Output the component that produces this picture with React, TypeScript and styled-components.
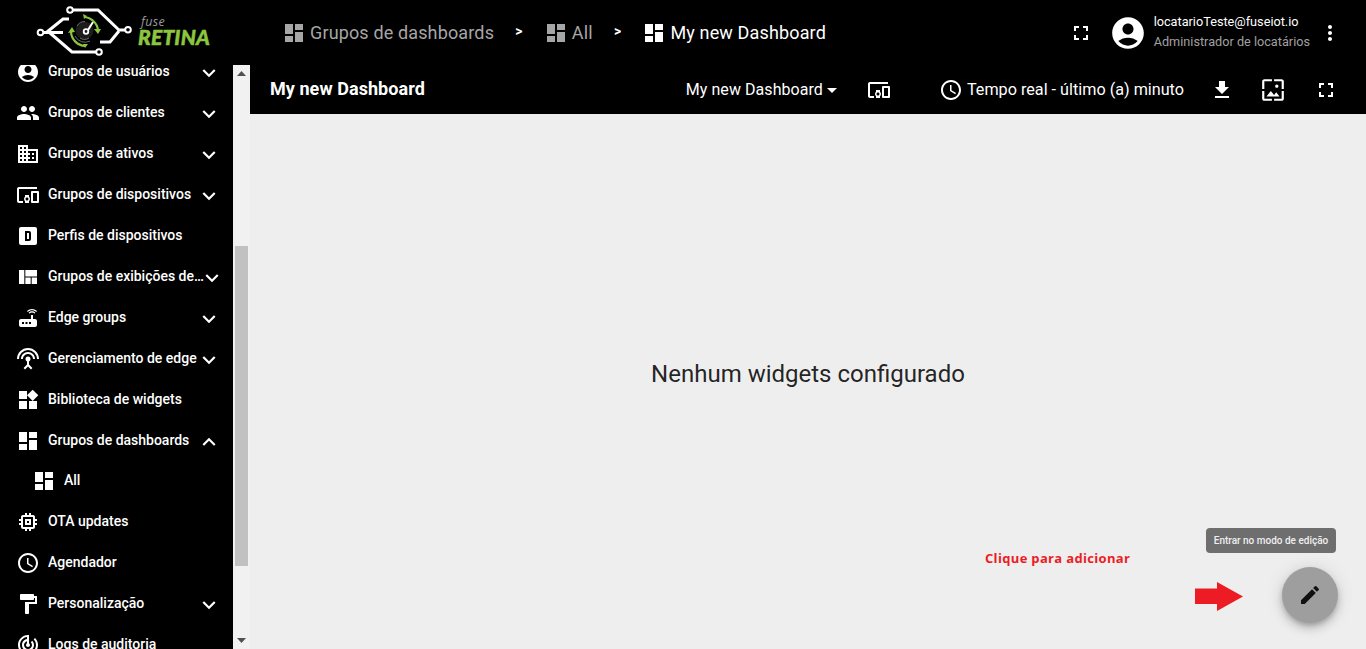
import React from "react";
import styled, { createGlobalStyle } from "styled-components";
import {
  MdAccountCircle, MdPeople, MdDomain, MdDevicesOther, MdViewQuilt, MdRouter,
  MdSettingsInputAntenna, MdWidgets, MdDashboard, MdMemory, MdSchedule, MdFormatPaint,
  MdTrackChanges, MdKeyboardArrowDown, MdKeyboardArrowUp, MdFullscreen, MdMoreVert,
  MdFileDownload, MdWallpaper, MdEdit, MdArrowDropDown,
} from "react-icons/md";

const Global = createGlobalStyle`
  html, body { margin: 0; padding: 0; height: 100%; overflow: hidden; }
  body { font-family: Roboto, "Liberation Sans", sans-serif; background: #eee; }
  #root { height: 100%; }
`;

const Page = styled.div`
  width: 1366px; height: 649px; display: flex; flex-direction: column; overflow: hidden; position: relative;
`;
const Header = styled.header`
  height: 65px; flex: none; background: #000; color: #fff; display: flex; align-items: center;
`;
const LogoBox = styled.div`
  width: 282px; flex: none; display: flex; padding-left: 36px; box-sizing: border-box; align-items: center;
`;
const LogoWords = styled.div`
  display: flex; flex-direction: column; margin-left: 2px; line-height: 1;
`;
const Fuse = styled.span`
  font: italic 400 12.5px "Open Sans", sans-serif; color: #999; line-height: 8px; letter-spacing: .3px; padding-left: 3px;
`;
const Retina = styled.span`
  font: italic 900 21px Lato, sans-serif; color: #8cc63f; line-height: 21px; letter-spacing: .2px;
  -webkit-text-stroke: .5px #8cc63f;
`;
const Crumbs = styled.nav`
  display: flex; align-items: center; flex: 1;
`;
const Crumb = styled.span<{ $active?: boolean }>`
  display: flex; align-items: center; gap: 4px; font-size: 18px; letter-spacing: .14px;
  color: ${p => (p.$active ? "#fff" : "#a6a6a6")};
`;
const Sep = styled.span`
  font-size: 14px; font-weight: 700; color: #fff; margin: 0 21.25px; position: relative; top: -2px;
`;
const UserArea = styled.div`
  display: flex; align-items: center; padding-right: 24px;
`;
const UserText = styled.div`
  display: flex; flex-direction: column; gap: 5px; margin: 0 8px 0 7px; font-size: 12.7px; line-height: 14px;
`;
const Email = styled.span`color: #fff; position: relative; top: -1px;`;
const Role = styled.span`color: #a0a0a0;`;
const Body = styled.div`flex: 1; display: flex; min-height: 0;`;
const Sidebar = styled.aside`
  width: 233px; flex: none; background: #000; overflow: hidden;
`;
const NavList = styled.ul`
  list-style: none; margin: -13.5px 0 0; padding: 0;
`;
const Row = styled.li<{ $sub?: boolean }>`
  height: ${p => (p.$sub ? "40px" : "41px")}; display: flex; align-items: center; color: #fff; font-size: 14px; font-weight: 500;
  padding: 0 11px ${p => (p.$sub ? "1px" : "0")} ${p => (p.$sub ? "32px" : "16px")}; gap: 8px; box-sizing: border-box;
  & > svg { flex: none; }
`;
const LabelSlot = styled.span`flex: 1; min-width: 0;`;
const Label = styled.span`
  display: block; max-width: 156px; white-space: nowrap; overflow: hidden; text-overflow: ellipsis; position: relative; top: -1px;
`;
const Chevron = styled.span<{ $nudge?: boolean }>`
  flex: none; display: flex; margin: 2px ${p => (p.$nudge ? "-2.5px" : "0")} 0 -26px;
`;
const Scroll = styled.div`
  width: 17px; flex: none; background: #f1f1f1; display: flex; flex-direction: column;
`;
const ScrollBtn = styled.div`
  height: 17px; flex: none; display: flex; align-items: center; justify-content: center;
`;
const ScrollTrack = styled.div`flex: 1; padding: 164px 2px 0;`;
const ScrollThumb = styled.div`height: 320px; background: #c1c1c1;`;
const Main = styled.main`flex: 1; display: flex; flex-direction: column; min-width: 0; position: relative;`;
const Toolbar = styled.div`
  height: 49px; flex: none; background: #000; color: #fff; display: flex; align-items: center; padding: 0 28px 0 20px;
`;
const Title = styled.h1`
  font-size: 18px; font-weight: 700; margin: -2px 0 0; flex: 1; letter-spacing: .06px;
`;
const Select = styled.span`
  display: flex; align-items: center; font-size: 16px; letter-spacing: .06px; margin-right: 23px;
`;
const Caret = styled(MdArrowDropDown)`
  margin-left: -3px;
`;
const ToolBtn = styled.span<{ $mr?: number }>`
  display: flex; margin-right: ${p => p.$mr ?? 0}px;
`;
const Time = styled.span`
  display: flex; align-items: center; gap: 4px; font-size: 16.2px; margin-right: 26px;
`;
const Content = styled.div`
  flex: 1; background: #eee; display: flex; align-items: center; justify-content: center; padding-bottom: 16px;
`;
const Empty = styled.div`font-size: 24px; color: rgba(0,0,0,.87);`;
const Hint = styled.div`
  position: absolute; left: 735px; top: 484px; color: #ed1c24; font: 700 13px "Open Sans", sans-serif; letter-spacing: .33px; white-space: nowrap;
`;
const ArrowMark = styled.svg`position: absolute; left: 945px; top: 517px;`;
const Fab = styled.button`
  position: absolute; left: 1032px; top: 502px; width: 56px; height: 56px; border-radius: 50%; border: 0; padding: 0;
  background: #9e9e9e; color: #111; display: flex; align-items: center; justify-content: center;
  box-shadow: 0 3px 5px -1px rgba(0,0,0,.2), 0 6px 10px 0 rgba(0,0,0,.14), 0 1px 18px 0 rgba(0,0,0,.12);
`;
const Tip = styled.div`
  position: absolute; left: 956px; top: 463px; width: 130px; height: 25px; border-radius: 4px; background: #6e6e6e;
  color: #eee; font-size: 10px; font-weight: 500; display: flex; align-items: center; justify-content: center;
`;

const DBox = () => (
  <svg width="24" height="24" viewBox="0 0 24 24" fill="#fff" fillRule="evenodd">
    <path d="M9 7v10h4a2 2 0 0 0 2-2V9a2 2 0 0 0-2-2H9m2 2h2v6h-2V9M5 3h14a2 2 0 0 1 2 2v14a2 2 0 0 1-2 2H5a2 2 0 0 1-2-2V5a2 2 0 0 1 2-2z" />
  </svg>
);

const Logo = () => (
  <svg width="100" height="57" viewBox="36 4 100 57" fill="none">
    <g stroke="#fff" strokeWidth="3" strokeLinejoin="miter" strokeLinecap="butt">
      <path d="M72 10h26l21 20h7" />
      <path d="M100 42h10l9-11" />
      <path d="M43 32.500h20" />
      <path d="M47 32L63 19h6" />
      <path d="M50 33l22 19h25" />
    </g>
    <g stroke="#fff" strokeWidth="2" fill="#000">
      <circle cx="70" cy="10" r="2.800" />
      <circle cx="40.500" cy="32.500" r="2.800" />
      <circle cx="128" cy="29.800" r="2.800" />
      <circle cx="99" cy="52" r="2.800" />
    </g>
    <g stroke="#8cc63f" strokeWidth="2.200">
      <path d="M84 17a15 15 0 0 1 14 13" />
      <path d="M85 46a15 15 0 0 1-14-14" />
    </g>
    <g fill="#8cc63f">
      <path d="M83 14l4 2-3 3zM94 29l7 0-3 5zM88 44l-3 4-2-4zM68 33l7-1-3-5z" />
    </g>
    <circle cx="84.500" cy="30.500" r="9" fill="#1c1c1c" />
    <g stroke="#6a6a6a" strokeWidth="1">
      <path d="M77 26a9 9 0 0 1 8-4.500" />
      <path d="M75 36a11 11 0 0 0 15 5" />
      <path d="M80 38a8 8 0 0 0 9 0" />
    </g>
    <path d="M88 30l5-8" stroke="#fff" strokeWidth="2" />
    <circle cx="86" cy="31.500" r="2.300" stroke="#fff" strokeWidth="1.800" />
  </svg>
);

const items: { icon: React.ReactNode; label: string; chevron?: "down" | "up"; nudge?: boolean; sub?: boolean }[] = [
  { icon: <MdAccountCircle size={24} />, label: "Grupos de usuários", chevron: "down" },
  { icon: <MdPeople size={24} />, label: "Grupos de clientes", chevron: "down" },
  { icon: <MdDomain size={24} />, label: "Grupos de ativos", chevron: "down" },
  { icon: <MdDevicesOther size={24} />, label: "Grupos de dispositivos", chevron: "down" },
  { icon: <DBox />, label: "Perfis de dispositivos" },
  { icon: <MdViewQuilt size={24} />, label: "Grupos de exibições de entidades", chevron: "down", nudge: true },
  { icon: <MdRouter size={24} />, label: "Edge groups", chevron: "down" },
  { icon: <MdSettingsInputAntenna size={24} />, label: "Gerenciamento de edge", chevron: "down" },
  { icon: <MdWidgets size={24} />, label: "Biblioteca de widgets" },
  { icon: <MdDashboard size={24} />, label: "Grupos de dashboards", chevron: "up" },
  { icon: <MdDashboard size={24} />, label: "All", sub: true },
  { icon: <MdMemory size={24} />, label: "OTA updates" },
  { icon: <MdSchedule size={24} />, label: "Agendador" },
  { icon: <MdFormatPaint size={24} />, label: "Personalização", chevron: "down" },
  { icon: <MdTrackChanges size={24} />, label: "Logs de auditoria" },
];

export default function App() {
  return (
    <Page>
      <Global />
      <Header>
        <LogoBox>
          <Logo />
          <LogoWords>
            <Fuse>fuse</Fuse>
            <Retina>RETINA</Retina>
          </LogoWords>
        </LogoBox>
        <Crumbs>
          <Crumb><MdDashboard size={24} />Grupos de dashboards</Crumb>
          <Sep>&gt;</Sep>
          <Crumb><MdDashboard size={24} />All</Crumb>
          <Sep>&gt;</Sep>
          <Crumb $active><MdDashboard size={24} />My new Dashboard</Crumb>
        </Crumbs>
        <UserArea>
          <ToolBtn $mr={16}><MdFullscreen size={24} /></ToolBtn>
          <MdAccountCircle size={38} />
          <UserText>
            <Email>locatarioTeste@fuseiot.io</Email>
            <Role>Administrador de locatários</Role>
          </UserText>
          <MdMoreVert size={24} />
        </UserArea>
      </Header>
      <Body>
        <Sidebar>
          <NavList>
            {items.map(it => (
              <Row key={it.label} $sub={it.sub}>
                {it.icon}
                <LabelSlot><Label>{it.label}</Label></LabelSlot>
                {it.chevron && (
                  <Chevron $nudge={it.nudge}>
                    {it.chevron === "down" ? <MdKeyboardArrowDown size={26} /> : <MdKeyboardArrowUp size={26} />}
                  </Chevron>
                )}
              </Row>
            ))}
          </NavList>
        </Sidebar>
        <Scroll>
          <ScrollBtn><svg width="9" height="5" viewBox="0 0 9 5"><path d="M4.500 0L9 5H0z" fill="#505050" /></svg></ScrollBtn>
          <ScrollTrack><ScrollThumb /></ScrollTrack>
          <ScrollBtn><svg width="9" height="5" viewBox="0 0 9 5"><path d="M0 0h9L4.500 5z" fill="#505050" /></svg></ScrollBtn>
        </Scroll>
        <Main>
          <Toolbar>
            <Title>My new Dashboard</Title>
            <Select>My new Dashboard<Caret size={24} /></Select>
            <ToolBtn $mr={48}><MdDevicesOther size={24} /></ToolBtn>
            <Time><MdSchedule size={24} />Tempo real - último (a) minuto</Time>
            <ToolBtn $mr={26}><MdFileDownload size={24} /></ToolBtn>
            <ToolBtn $mr={28}><MdWallpaper size={26} /></ToolBtn>
            <ToolBtn><MdFullscreen size={24} /></ToolBtn>
          </Toolbar>
          <Content><Empty>Nenhum widgets configurado</Empty></Content>
          <Hint>Clique para adicionar</Hint>
          <ArrowMark width="48" height="29" viewBox="0 0 48 29"><path d="M0 6.500h22V0l26 14.500L22 29v-7H0z" fill="#ed1c24" /></ArrowMark>
          <Tip>Entrar no modo de edição</Tip>
          <Fab aria-label="Entrar no modo de edição"><MdEdit size={24} /></Fab>
        </Main>
      </Body>
    </Page>
  );
}
